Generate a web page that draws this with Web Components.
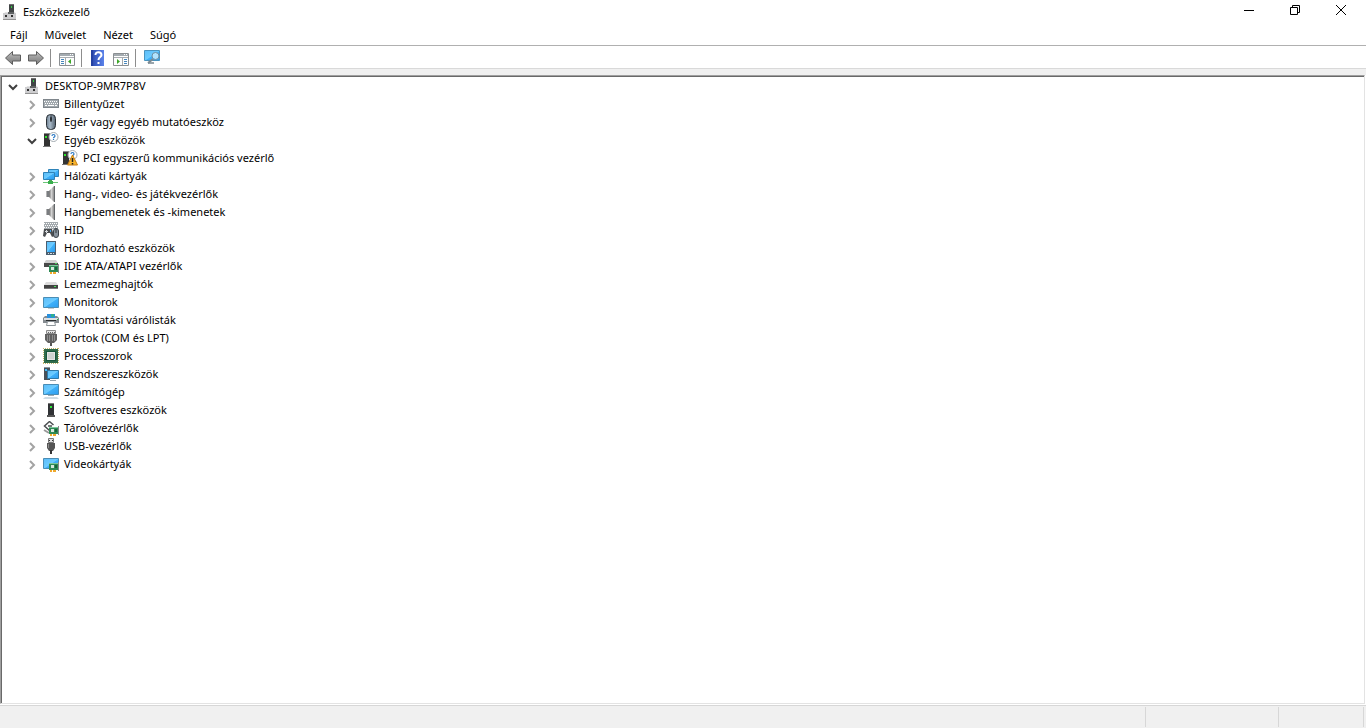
<!DOCTYPE html>
<html lang="hu">
<head>
<meta charset="utf-8">
<meta name="viewport" content="width=device-width, initial-scale=1">
<title>Eszközkezelő</title>
<style>
  html,
  body {
    height: 100%;
    margin: 0;
  }

  body {
    font: 11px/18px "Noto Sans", "Open Sans", sans-serif;
    color: #000;
    background: #fff;
  }
</style>
</head>
<body>
<app-window>
  <title-bar slot="title">Eszközkezelő</title-bar>
  <menu-bar slot="menu"></menu-bar>
  <tool-bar slot="tools"></tool-bar>
  <tree-item icon="root" label="DESKTOP-9MR7P8V" open>
    <tree-item icon="keyboard" label="Billentyűzet"></tree-item>
    <tree-item icon="mouse" label="Egér vagy egyéb mutatóeszköz"></tree-item>
    <tree-item icon="unknown" label="Egyéb eszközök" open>
      <tree-item icon="warning" label="PCI egyszerű kommunikációs vezérlő" leaf></tree-item>
    </tree-item>
    <tree-item icon="network" label="Hálózati kártyák"></tree-item>
    <tree-item icon="speaker" label="Hang-, video- és játékvezérlők"></tree-item>
    <tree-item icon="speaker" label="Hangbemenetek és -kimenetek"></tree-item>
    <tree-item icon="hid" label="HID"></tree-item>
    <tree-item icon="portable" label="Hordozható eszközök"></tree-item>
    <tree-item icon="ide" label="IDE ATA/ATAPI vezérlők"></tree-item>
    <tree-item icon="disk" label="Lemezmeghajtók"></tree-item>
    <tree-item icon="monitor" label="Monitorok"></tree-item>
    <tree-item icon="printer" label="Nyomtatási várólisták"></tree-item>
    <tree-item icon="port" label="Portok (COM és LPT)"></tree-item>
    <tree-item icon="cpu" label="Processzorok"></tree-item>
    <tree-item icon="system" label="Rendszereszközök"></tree-item>
    <tree-item icon="computer" label="Számítógép"></tree-item>
    <tree-item icon="software" label="Szoftveres eszközök"></tree-item>
    <tree-item icon="storage" label="Tárolóvezérlők"></tree-item>
    <tree-item icon="usb" label="USB-vezérlők"></tree-item>
    <tree-item icon="video" label="Videokártyák"></tree-item>
  </tree-item>
  <status-bar slot="status"></status-bar>
</app-window>

<script>
const BLUE = `<linearGradient id="b" x1="0" y1="0" x2="1" y2="1">
  <stop offset="0" stop-color="#5cbdf8"/><stop offset=".5" stop-color="#6ccbff"/>
  <stop offset=".55" stop-color="#3fb0f8"/><stop offset="1" stop-color="#2b9cf0"/>
</linearGradient>`;
const GREY = `<linearGradient id="g" x1="0" y1="0" x2="1" y2="0">
  <stop offset="0" stop-color="#6e6e6e"/><stop offset=".5" stop-color="#d2d2d2"/><stop offset="1" stop-color="#8d8d8d"/>
</linearGradient>`;
const ARROW = `<linearGradient id="a" x1="0" y1="0" x2="0" y2="1">
  <stop offset="0" stop-color="#c4c4c4"/><stop offset=".5" stop-color="#9a9a9a"/><stop offset="1" stop-color="#7a7a7a"/>
</linearGradient>`;
const CARD = `<path d="M6 7h9v7H6z" fill="#2f8a55"/><path d="M6 7h9v1H6z" fill="#7cc79a"/>
  <path d="M8 9h3v3H8z" fill="#d5e8dc"/><path d="M12 9h2v3h-2z" fill="#17633a"/>
  <path d="M15 6h1v9h-1z" fill="#8a8a8a"/><path d="M7 14h2v2H7zM10 14h3v2h-3z" fill="#f0a92c"/>`;
const TOWER = `<path d="M1 1h6v13H1z" fill="#333"/><path d="M1 1h6v1H1z" fill="#8a8a8a"/>
  <path d="M2 4h2v2H2z" fill="#2ee52e"/><path d="M0 14h8v1H0z" fill="#777"/>`;
const QUESTION = `<circle cx="10.500" cy="5" r="4.500" fill="#fff" stroke="#a3abb1"/>
  <path d="M9 4c0-2 3-2 3 0 0 1-1.500 1-1.500 2.200M10.500 7v1" fill="none" stroke="#2978c4" stroke-width="1.200"/>`;
const PANE = `<path d="M.5 3.500h15v12H.5z" fill="#fdfdfd" stroke="#8b8f92"/><path d="M1 4h14v2H1z" fill="#a4abb0"/>
  <path d="M11 4h1v1h-1zM13 4h1v1h-1z" fill="#fff"/><path d="M1 7.500h14" stroke="#a8adb1"/>`;

const ICONS = {
  root: `<path d="M7 0h5v9H7z" fill="#414546"/><path d="M7 0h5v1H7z" fill="#6f6f6f"/><path d="M9 2h1v2H9z" fill="#34d044"/>
    <path d="M3 8h4v1h5V8h1l1 2H2z" fill="#e2e2e2"/><path d="M1 9h13v7H1z" fill="#cdcdcf"/><path d="M1 15h13v1H1z" fill="#939393"/>
    <path d="M6 8h6v2H6z" fill="#606364"/><path d="M3 11h2v2H3zM9 11h2v2H9z" fill="#303030"/>`,
  keyboard: `<path d="M0 3h16v9H0z" fill="#7f868c"/><path d="M1 4h14v7H1z" fill="#a2a9ae"/>
    <path d="M1 5.500h14M2 7.500h13" stroke="#fff" stroke-dasharray="1 1"/>
    <path d="M2 9.500h2M5 9.500h6M12 9.500h2" stroke="#fff"/>`,
  mouse: `<linearGradient id="m"><stop stop-color="#6f8090"/><stop offset=".4" stop-color="#a9bac9"/><stop offset="1" stop-color="#52606e"/></linearGradient>
    <rect x="3.500" y=".5" width="9" height="15" rx="4" fill="url(#m)" stroke="#2b3137"/>
    <path d="M8 1v7" stroke="#242b31"/><rect x="7" y="3" width="2" height="4" rx="1" fill="#2b3137"/>`,
  unknown: TOWER + QUESTION,
  warning: TOWER + QUESTION + `<path d="M10.500 5 15.500 15h-10z" fill="#f9b62d" stroke="#c67d13" stroke-linejoin="round"/>
    <path d="M10.500 8v4M10.500 13v1.500" stroke="#222" stroke-width="1.500"/>`,
  network: `${BLUE}<path d="M5.500 1.500h10v7h-10z" fill="url(#b)" stroke="#2f83b8"/>
    <path d="M.5 4.500h11v7H.5z" fill="url(#b)" stroke="#2f83b8"/>
    <path d="M6 12h3v2H6z" fill="#45a852"/><path d="M0 14h15v1H0z" fill="#6bc678"/><path d="M5 13h5v3H5z" fill="#39ad4c"/>`,
  speaker: `${GREY}<path d="M3 5h3v6H3z" fill="#7a7d80"/><path d="M3 5h1v6H3z" fill="#b3b3b3"/><path d="M6 5l5-5v16l-5-5z" fill="url(#g)"/>
    <path d="M11 0h1v16h-1z" fill="#63676a"/>`,
  hid: `<path d="M1 0h14v7H1z" fill="#a4aaae"/><path d="M1 1.500h14M2 3.500h13M1 5.500h14" stroke="#fff" stroke-dasharray="1 1"/>
    <path d="M1 7h8l2 7-2 1-2-4H4l-2 4-2-1z" fill="#4a4d50"/><path d="M3 8h1v1h1v1H4v1H3v-1H2V9h1z" fill="#d7dadd"/>
    <path d="M7 8h1v2H7z" fill="#45a5ea"/><rect x="10.500" y="6.500" width="5" height="9" rx="2.500" fill="#88939d" stroke="#3c4349"/>
    <path d="M13 7v4" stroke="#30363b"/>`,
  portable: `${BLUE}<path d="M3 1h10v14H3z" fill="#4b5f70"/><path d="M4 2h8v10H4z" fill="url(#b)"/><path d="M5 13h1v1H5zM7 13h2v1H7zM10 13h1v1h-1z" fill="#d6dce0"/>`,
  ide: `<path d="M3 2h10l2 3H1z" fill="#cfcfcf"/><path d="M1 5h14v4H1z" fill="#494949"/>
    <path d="M12 5h2v1h-2z" fill="#43cf53"/>${CARD}`,
  disk: `<path d="M3 6h10l2 3H1z" fill="#dcdcdc"/><path d="M1 9h14v4H1z" fill="#424242"/><path d="M1 12h14v1H1z" fill="#777"/><path d="M11 10h2v1h-2z" fill="#47e457"/>`,
  monitor: `${BLUE}<path d="M.5 3.500h15v10H.5z" fill="url(#b)" stroke="#4a8db5"/><path d="M5 14h6v1H5z" fill="#c3ccd1"/>`,
  printer: `<path d="M4 2h8v4H4z" fill="#2a91dd"/><path d="M8 2h3v3H8z" fill="#2fae8c"/><path d="M2 4h2v2h8V4h2l2 2v5H0V6z" fill="#858b90"/>
    <path d="M1 6h14v2H1z" fill="#dde0e2"/><path d="M3 8h10v1H3z" fill="#2b2e30"/><path d="M4.500 9.500h7l1 4h-9z" fill="#fff" stroke="#8c9499"/>
    <path d="M14 7h1v1h-1z" fill="#25b94b"/>`,
  port: `<path d="M3.500.5h9v3h-9z" fill="#e6e6e6" stroke="#8b8b8b"/><path d="M5 2.500h7" stroke="#666" stroke-dasharray="1 1"/>
    <path d="M2 4h12v6l-3 3H5l-3-3z" fill="#606060"/><path d="M4.500 5v6M6.500 5v6M9.500 5v6M11.500 5v6" stroke="#8f8f8f"/><path d="M7 13h2v3H7z" fill="#555"/>`,
  cpu: `<path d="M0 .5h16M0 15.500h16M.5 0v16M15.500 0v16" stroke="#c2b46a" stroke-dasharray="1 1"/>
    <path d="M1 1h14v14H1z" fill="#2f6a4b"/><path d="M3 3h10v10H3z" fill="#17553a"/><path d="M4 4h8v8H4z" fill="#e4e4e4"/><path d="M5 5h6v6H5z" fill="#cfd3d1"/>`,
  system: `${BLUE}<path d="M1 1h6v13H1z" fill="#475059"/><path d="M1 1h6v1H1z" fill="#8c969e"/><path d="M2 3h2v2H2z" fill="#45b9f5"/>
    <path d="M4.500 4.500h11v8h-11z" fill="url(#b)" stroke="#2f79a8"/><path d="M7 14h6v1H7z" fill="#9aa5ac"/>`,
  computer: `${BLUE}<path d="M.5.5h15v10H.5z" fill="url(#b)" stroke="#4a8db5"/><path d="M5 11h6v1H5z" fill="#9baab3"/>
    <path d="M2 13h12l2 2H0z" fill="#cfdce4"/>`,
  software: `<path d="M5 1h6v12H5z" fill="#303235"/><path d="M5 1h6v1H5z" fill="#777"/><path d="M7 4h2v2H7z" fill="#2de73c"/><path d="M4 13h8v2H4z" fill="#555"/>`,
  storage: `<path d="M6.500 1.500 1.500 6l5 4.500M6.500 1.500l4 3.500M5 6h4" fill="none" stroke="#4b4e50" stroke-width="1.500"/>
    <path d="M1 10l5 3" stroke="#999" stroke-width="2"/>${CARD}`,
  usb: `<path d="M5.500.5h5v4h-5z" fill="#ddd" stroke="#777"/><path d="M6 2h1v1H6zM9 2h1v1H9z" fill="#333"/>
    <path d="M4 5h8v5l-2 3H6l-2-3z" fill="#555"/><path d="M5.500 6v4" stroke="#8c8c8c"/><path d="M7 12h2v4H7z" fill="#333"/>`,
  video: `${BLUE}<path d="M.5 2.500h15v10H.5z" fill="url(#b)" stroke="#4a8db5"/>${CARD}`,

  back: `${ARROW}<path d="M.5 8 7.500 1.500V5h8v6h-8v3.500z" fill="url(#a)" stroke="#5c5c5c"/>`,
  forward: `${ARROW}<path d="M15.500 8 8.500 1.500V5h-8v6h8v3.500z" fill="url(#a)" stroke="#5c5c5c"/>`,
  tree: `${PANE}<path d="M6.500 8v7" stroke="#a5a9ac"/><path d="M2 9.500h3M2 11.500h3M2 13.500h3" stroke="#4687bd"/><path d="M12 9v5l-3-2.500z" fill="#3ca728"/>`,
  help: `<linearGradient id="h"><stop stop-color="#2845ab"/><stop offset="1" stop-color="#5a82ea"/></linearGradient>
    <path d="M1 0h13v16H1z" fill="url(#h)"/><path d="M1 0h2v16H1z" fill="#2440a1"/>
    <path d="M5.500 5c0-4 6-3.500 6 0 0 2-3 2.200-3 5M8.500 12v2" fill="none" stroke="#fff" stroke-width="2"/>`,
  panel: `${PANE}<path d="M9.500 8v7" stroke="#a5a9ac"/><path d="M11 9.500h3M11 11.500h3M11 13.500h3" stroke="#4687bd"/><path d="M4 9v5l3-2.500z" fill="#3ca728"/>`,
  scan: `${BLUE}<path d="M.5.500h15v10H.5z" fill="url(#b)" stroke="#4a94bf"/><path d="M4 12h6v2H4z" fill="#9aa5ac"/>
    <path d="M9 9l-5 4" stroke="#7b8991" stroke-width="2"/><circle cx="11.500" cy="6" r="3.500" fill="#c5ecff" fill-opacity=".85" stroke="#6e8ea2"/>`,

  minimize: `<path d="M3 8.500h10" stroke="#000"/>`,
  restore: `<path d="M3.500 5.500h7v7h-7zM5.500 5V3.500h7v7H11" fill="none" stroke="#000"/>`,
  close: `<path d="M3 3l10 10M13 3 3 13" stroke="#000"/>`,
  expand: `<path d="M6 4l4 4-4 4" fill="none" stroke="#a3a3a3" stroke-width="2"/>`,
  collapse: `<path d="M4 6l4 4 4-4" fill="none" stroke="#404040" stroke-width="2"/>`
};

class SvgIcon extends HTMLElement {
  constructor() {
    super();
    this.attachShadow({ mode: "open" });
  }

  static get observedAttributes() {
    return ["name"];
  }

  attributeChangedCallback() {
    this.shadowRoot.innerHTML = /* html */`
    <style>
      :host { display: block; flex: none; width: 16px; height: 16px; }
      svg { display: block; }
    </style>
    <svg width="16" height="16" viewBox="0 0 16 16" aria-hidden="true">${ICONS[this.getAttribute("name")] || ""}</svg>`;
  }
}

class AppWindow extends HTMLElement {
  constructor() {
    super();
    this.attachShadow({ mode: "open" });
  }

  connectedCallback() {
    this.shadowRoot.innerHTML = /* html */`
    <style>
      :host {
        display: flex;
        flex-direction: column;
        height: 100vh;
        overflow: hidden;
      }

      main {
        flex: 1;
        min-height: 0;
        display: flex;
        padding: 6px 1px 1px 0;
        background: linear-gradient(#f0f0f0 6px, #fff 6px);
      }

      /* sunken edge: light outer line, dark inner line */
      .tree {
        flex: 1;
        overflow: auto;
        padding: 1px 0 0 1px;
        background: #fff;
        border: 1px solid;
        border-color: #a0a0a0 #e3e3e3 #e3e3e3 #a0a0a0;
        box-shadow: inset 1px 1px #696969;
      }
    </style>
    <slot name="title"></slot>
    <slot name="menu"></slot>
    <slot name="tools"></slot>
    <main><div class="tree" role="tree"><slot></slot></div></main>
    <slot name="status"></slot>`;
  }
}

class TitleBar extends HTMLElement {
  constructor() {
    super();
    this.attachShadow({ mode: "open" });
  }

  connectedCallback() {
    this.shadowRoot.innerHTML = /* html */`
    <style>
      :host {
        display: flex;
        align-items: center;
        height: 24px;
        padding: 0 2px;
      }

      .title {
        flex: 1;
        padding-left: 5px;
      }

      button {
        display: grid;
        place-items: center;
        width: 46px;
        height: 20px;
        padding: 0;
        border: 0;
        background: none;
      }

      .controls {
        display: flex;
        align-self: start;
      }
    </style>
    <svg-icon name="root"></svg-icon>
    <span class="title"><slot></slot></span>
    <div class="controls">
      <button aria-label="Kis méret"><svg-icon name="minimize"></svg-icon></button>
      <button aria-label="Előző méret"><svg-icon name="restore"></svg-icon></button>
      <button aria-label="Bezárás"><svg-icon name="close"></svg-icon></button>
    </div>`;
  }
}

class MenuBar extends HTMLElement {
  constructor() {
    super();
    this.attachShadow({ mode: "open" });
  }

  connectedCallback() {
    this.shadowRoot.innerHTML = /* html */`
    <style>
      :host {
        display: flex;
        gap: 1px;
        height: 21px;
        padding-left: 2px;
        border-bottom: 1px solid #b0b0b0;
      }

      button {
        padding: 0 8px;
        border: 0;
        background: none;
        font: inherit;
        color: inherit;
      }

      button:hover { background: #e5f3ff; }
    </style>
    <button>Fájl</button>
    <button>Művelet</button>
    <button>Nézet</button>
    <button>Súgó</button>`;
  }
}

class ToolBar extends HTMLElement {
  constructor() {
    super();
    this.attachShadow({ mode: "open" });
  }

  connectedCallback() {
    this.shadowRoot.innerHTML = /* html */`
    <style>
      :host {
        display: flex;
        align-items: center;
        height: 22px;
        padding: 0 1px;
        border-bottom: 1px solid #d9d9d9;
      }

      button {
        padding: 2px 3px 0 4px;
        border: 0;
        background: none;
      }

      .separator {
        width: 1px;
        height: 18px;
        margin: 2px 4px 0 3px;
        background: #8d8d8d;
      }
    </style>
    <button aria-label="Vissza"><svg-icon name="back"></svg-icon></button>
    <button aria-label="Előre"><svg-icon name="forward"></svg-icon></button>
    <div class="separator"></div>
    <button aria-label="Konzolfa"><svg-icon name="tree"></svg-icon></button>
    <div class="separator"></div>
    <button aria-label="Súgó"><svg-icon name="help"></svg-icon></button>
    <button aria-label="Műveletpanel"><svg-icon name="panel"></svg-icon></button>
    <div class="separator"></div>
    <button aria-label="Hardverváltozások keresése"><svg-icon name="scan"></svg-icon></button>`;
  }
}

class TreeItem extends HTMLElement {
  constructor() {
    super();
    this.attachShadow({ mode: "open" });
  }

  static get styles() {
    return /* css */`
      :host {
        display: block;
      }

      .row {
        display: flex;
        align-items: center;
        height: 18px;
      }

      button {
        display: grid;
        place-items: center;
        width: 22px;
        height: 18px;
        padding: 2px 0 0;
        border: 0;
        background: none;
      }

      .leaf button {
        visibility: hidden;
      }

      .label {
        padding-left: 5px;
        white-space: nowrap;
      }

      .children {
        display: none;
        padding-left: 19px;
      }

      :host([open]) .children {
        display: block;
      }
    `;
  }

  connectedCallback() {
    this.setAttribute("role", "treeitem");
    this.render();
    this.shadowRoot.querySelector("button").addEventListener("click", () => {
      this.toggleAttribute("open");
      this.update();
    });
    this.update();
  }

  update() {
    const open = this.hasAttribute("open");
    this.shadowRoot.querySelector("button svg-icon").setAttribute("name", open ? "collapse" : "expand");
    if (!this.hasAttribute("leaf")) this.setAttribute("aria-expanded", open);
  }

  render() {
    const label = this.getAttribute("label");
    this.shadowRoot.innerHTML = /* html */`
    <style>${TreeItem.styles}</style>
    <div class="row ${this.hasAttribute("leaf") ? "leaf" : ""}">
      <button aria-label="${label}"><svg-icon></svg-icon></button>
      <svg-icon name="${this.getAttribute("icon")}"></svg-icon>
      <span class="label">${label}</span>
    </div>
    <div class="children" role="group"><slot></slot></div>`;
  }
}

class StatusBar extends HTMLElement {
  constructor() {
    super();
    this.attachShadow({ mode: "open" });
  }

  connectedCallback() {
    this.shadowRoot.innerHTML = /* html */`
    <style>
      :host {
        display: flex;
        height: 20px;
        padding: 1px 2px 1px 0;
        background: #f0f0f0;
        border-top: 1px solid #d7d7d7;
      }

      div {
        box-sizing: border-box;
        width: 133px;
        border-right: 1px solid #d7d7d7;
      }

      .message { flex: 1; }
      .end { width: 85px; }
    </style>
    <div class="message" role="status"></div>
    <div></div>
    <div class="end"></div>`;
  }
}

customElements.define("svg-icon", SvgIcon);
customElements.define("app-window", AppWindow);
customElements.define("title-bar", TitleBar);
customElements.define("menu-bar", MenuBar);
customElements.define("tool-bar", ToolBar);
customElements.define("tree-item", TreeItem);
customElements.define("status-bar", StatusBar);
</script>
</body>
</html>
